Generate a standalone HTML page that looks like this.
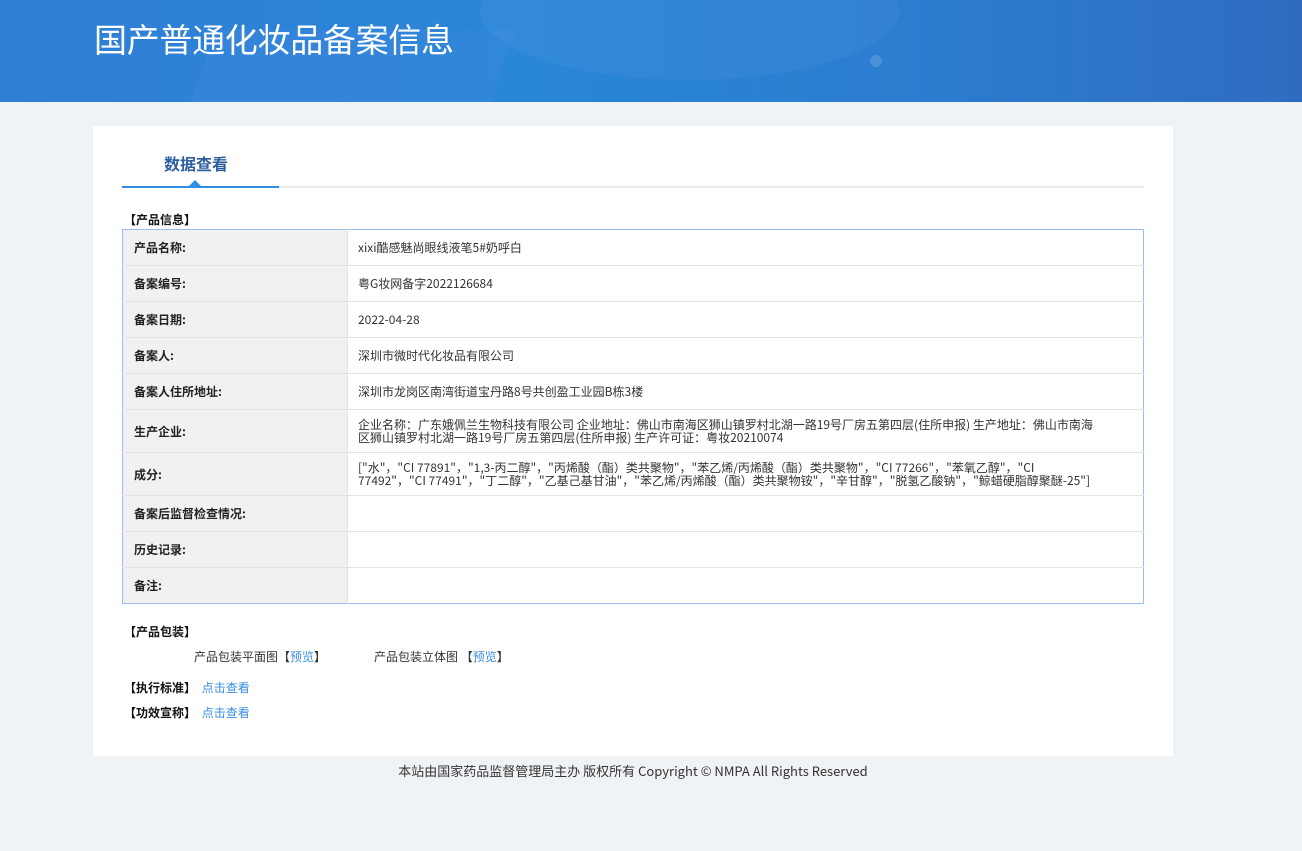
<!DOCTYPE html>
<html><head><meta charset="utf-8"><style>
*{margin:0;padding:0;box-sizing:border-box}
body{width:1302px;height:851px;background:#f0f3f6;font-family:"Liberation Sans","Noto Sans CJK SC",sans-serif;color:#333;font-size:12px;position:relative;overflow:hidden}
.hdr{position:absolute;left:0;top:0;width:1302px;height:102px;background:linear-gradient(90deg,#2f7fd6 0%,#2a86d8 40%,#2b7dd0 70%,#2f6cc0 100%);overflow:hidden}
.hdr h1{position:absolute;left:94px;top:14px;font-size:33px;font-weight:normal;color:#fff;font-family:"Noto Sans CJK SC",sans-serif;letter-spacing:-0.3px}
.card{position:absolute;left:93px;top:126px;width:1080px;height:630px;background:#fff}
.tab{position:absolute;left:164px;top:151px;font-size:16px;font-weight:bold;color:#2b5f9e;font-family:"Noto Sans CJK SC",sans-serif}
.line{position:absolute;left:122px;top:186px;width:1022px;height:2px;background:#e8ebef}
.line2{position:absolute;left:122px;top:186px;width:157px;height:2px;background:#2f8de4}
.tri{position:absolute;left:189px;top:180px;width:0;height:0;border-left:6px solid transparent;border-right:6px solid transparent;border-bottom:6px solid #2f8de4}
.sec{position:absolute;font-weight:bold;color:#111;font-size:12px;font-family:"Noto Sans CJK SC",sans-serif}
table{position:absolute;left:122px;top:229px;width:1022px;border-collapse:collapse;border:1px solid #9dbdf0}
td{border-bottom:1px solid #e3e3e3;height:36px;vertical-align:middle;font-family:"Noto Sans CJK SC",sans-serif;font-size:12px;line-height:13px}
td.l{width:225px;background:#f1f1f1;font-weight:bold;padding-left:11px;color:#222;border-right:1px solid #e3e3e3}
td.v{padding-left:10px;color:#333}
tr.t td{height:43px}
.lnk{color:#3a8ee0}
.ft{position:absolute;top:761px;left:0;width:1266px;text-align:center;font-size:13px;color:#333;font-family:"Noto Sans CJK SC",sans-serif}
</style></head><body>
<div class="hdr">
<div style="position:absolute;left:200px;top:30px;width:300px;height:90px;background:rgba(80,140,230,.2);transform:skewX(-20deg)"></div>
<div style="position:absolute;left:480px;top:-60px;width:420px;height:140px;border-radius:50%;background:rgba(255,255,255,.04)"></div>
<div style="position:absolute;left:870px;top:55px;width:12px;height:12px;border-radius:50%;background:rgba(255,255,255,.15)"></div>
<h1>国产普通化妆品备案信息</h1></div>
<div class="card"></div>
<div class="tab">数据查看</div>
<div class="line"></div><div class="line2"></div><div class="tri"></div>
<div class="sec" style="left:124px;top:211px">【产品信息】</div>
<table>
<tr><td class="l">产品名称:</td><td class="v">xixi酷感魅尚眼线液笔5#奶呼白</td></tr>
<tr><td class="l">备案编号:</td><td class="v">粤G妆网备字2022126684</td></tr>
<tr><td class="l">备案日期:</td><td class="v">2022-04-28</td></tr>
<tr><td class="l">备案人:</td><td class="v">深圳市微时代化妆品有限公司</td></tr>
<tr><td class="l">备案人住所地址:</td><td class="v">深圳市龙岗区南湾街道宝丹路8号共创盈工业园B栋3楼</td></tr>
<tr class="t"><td class="l">生产企业:</td><td class="v" style="padding-right:40px">企业名称：广东娥佩兰生物科技有限公司 企业地址：佛山市南海区狮山镇罗村北湖一路19号厂房五第四层(住所申报) 生产地址：佛山市南海区狮山镇罗村北湖一路19号厂房五第四层(住所申报) 生产许可证：粤妆20210074</td></tr>
<tr class="t"><td class="l">成分:</td><td class="v" style="padding-right:40px">["水"，"CI 77891"，"1,3-丙二醇"，"丙烯酸（酯）类共聚物"，"苯乙烯/丙烯酸（酯）类共聚物"，"CI 77266"，"苯氧乙醇"，"CI 77492"，"CI 77491"，"丁二醇"，"乙基己基甘油"，"苯乙烯/丙烯酸（酯）类共聚物铵"，"辛甘醇"，"脱氢乙酸钠"，"鲸蜡硬脂醇聚醚-25"]</td></tr>
<tr><td class="l">备案后监督检查情况:</td><td class="v"></td></tr>
<tr><td class="l">历史记录:</td><td class="v"></td></tr>
<tr><td class="l" style="border-bottom:none">备注:</td><td class="v" style="border-bottom:none"></td></tr>
</table>
<div class="sec" style="left:124px;top:623px">【产品包装】</div>
<div style="position:absolute;left:194px;top:648px;font-family:'Noto Sans CJK SC',sans-serif">产品包装平面图【<span class="lnk">预览</span>】</div>
<div style="position:absolute;left:374px;top:648px;font-family:'Noto Sans CJK SC',sans-serif">产品包装立体图 【<span class="lnk">预览</span>】</div>
<div class="sec" style="left:124px;top:679px">【执行标准】 <span class="lnk" style="font-weight:normal;margin-left:3px">点击查看</span></div>
<div class="sec" style="left:124px;top:704px">【功效宣称】 <span class="lnk" style="font-weight:normal;margin-left:3px">点击查看</span></div>
<div class="ft">本站由国家药品监督管理局主办 版权所有 Copyright © NMPA All Rights Reserved</div>
</body></html>
